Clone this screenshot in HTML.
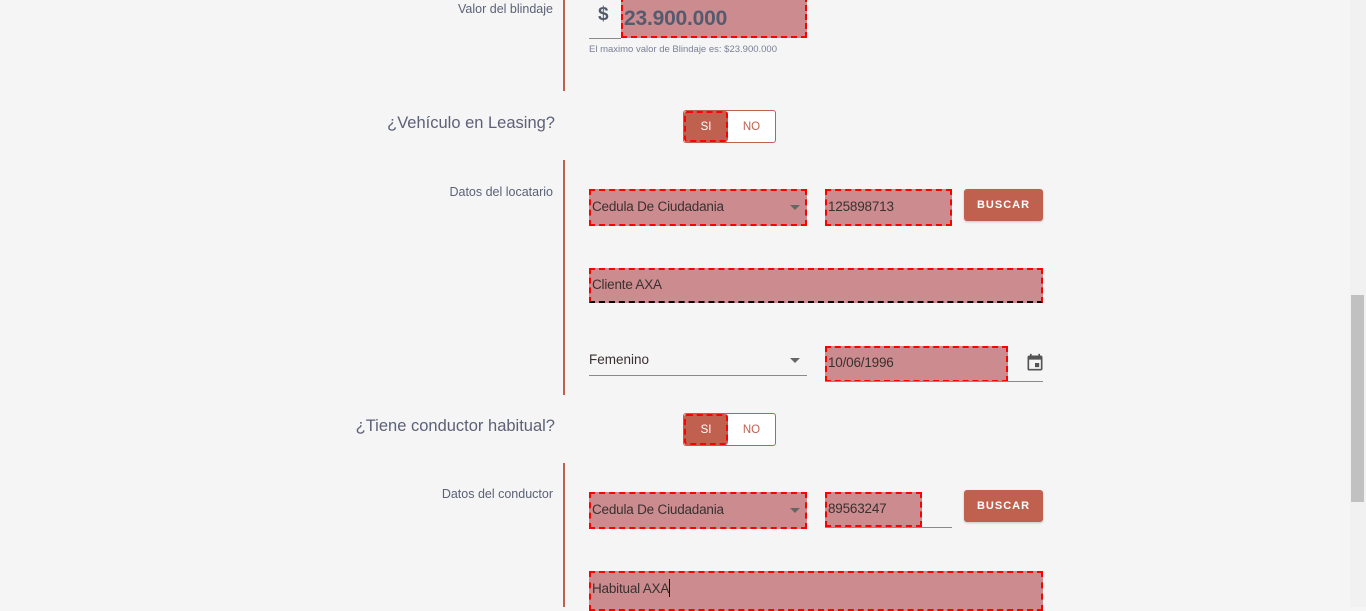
<!DOCTYPE html>
<html><head><meta charset="utf-8"><style>
*{margin:0;padding:0;box-sizing:border-box}
html,body{width:1366px;height:607px;overflow:hidden;background:#f5f5f5;font-family:"Liberation Sans",sans-serif}
.a{position:absolute}
.vl{position:absolute;left:563px;width:2px;background:#c0604f}
.lbl{position:absolute;color:#5c6178;font-size:12.5px;text-align:right;right:813px}
.q{position:absolute;color:#5c6178;font-size:16.5px;text-align:right;right:811px}
.hl{position:absolute;background:#cc8c8f;border:2px dashed #ff0000;color:#3a3030;font-size:13.5px;padding-left:1px;padding-bottom:3px;display:flex;align-items:center;letter-spacing:-0.2px}
.ul{position:absolute;height:1px;background:#8a8a8a}
.btn{position:absolute;background:#c0604f;color:#fff;font-size:11px;font-weight:bold;letter-spacing:1px;border-radius:3px;display:flex;align-items:center;justify-content:center;box-shadow:0 1px 2px rgba(0,0,0,.2)}
.tog{position:absolute;width:93px;height:33px;border:1px solid #c0604f;border-radius:3px;background:#fff;overflow:hidden}
.tog .si{position:absolute;left:0;top:0;width:44px;height:31px;background:#c0604f;border:2px dashed #ff0000;border-radius:3px;color:#fff;font-size:11.5px;display:flex;align-items:center;justify-content:center}
.tog .no{position:absolute;left:44px;top:0;width:47px;height:31px;color:#c0604f;font-size:11.5px;display:flex;align-items:center;justify-content:center}
.arr{position:absolute;width:0;height:0;border-left:5px solid transparent;border-right:5px solid transparent;border-top:5px solid #666}
</style></head><body>

<div class="vl" style="top:0;height:91px"></div>
<div class="vl" style="top:160px;height:235px"></div>
<div class="vl" style="top:463px;height:144px"></div>

<div class="lbl" style="top:2px">Valor del blindaje</div>
<div class="a" style="left:598px;top:4px;font-size:19px;color:#555b6e;font-weight:bold">$</div>
<div class="hl" style="left:621px;top:-4px;width:186px;height:42px;font-size:21px;color:#555b6e;padding-top:4px;padding-bottom:0;font-weight:bold">23.900.000</div>
<div class="ul" style="left:589px;top:38px;width:32px"></div>
<div class="a" style="left:589px;top:44px;font-size:9.5px;color:#7a8096">El maximo valor de Blindaje es: $23.900.000</div>

<div class="q" style="top:114px">¿Vehículo en Leasing?</div>
<div class="tog" style="left:683px;top:110px"><div class="si">SI</div><div class="no">NO</div></div>

<div class="lbl" style="top:185px">Datos del locatario</div>
<div class="hl" style="left:589px;top:189px;width:218px;height:37px">Cedula De Ciudadania</div>
<div class="arr" style="left:790px;top:205px"></div>
<div class="hl" style="left:825px;top:189px;width:127px;height:37px">125898713</div>
<div class="btn" style="left:964px;top:189px;width:79px;height:32px">BUSCAR</div>

<div class="hl" style="left:589px;top:268px;width:454px;height:35px;border-bottom-color:#000">Cliente AXA</div>

<div class="a" style="left:589px;top:352px;font-size:13.5px;color:#3a3030">Femenino</div>
<div class="arr" style="left:790px;top:358px"></div>
<div class="ul" style="left:589px;top:375px;width:218px"></div>
<div class="hl" style="left:825px;top:346px;width:183px;height:36px">10/06/1996</div>
<div class="ul" style="left:825px;top:381px;width:218px"></div>
<svg class="a" style="left:1025px;top:353px" width="20" height="20" viewBox="0 0 24 24"><path fill="#555" d="M17 12h-5v5h5v-5zM16 1v2H8V1H6v2H5c-1.11 0-1.99.9-1.99 2L3 19a2 2 0 0 0 2 2h14c1.1 0 2-.9 2-2V5c0-1.1-.9-2-2-2h-1V1h-2zm3 18H5V8h14v11z"/></svg>

<div class="q" style="top:417px">¿Tiene conductor habitual?</div>
<div class="tog" style="left:683px;top:413px"><div class="si">SI</div><div class="no">NO</div></div>

<div class="lbl" style="top:487px">Datos del conductor</div>
<div class="hl" style="left:589px;top:492px;width:218px;height:37px">Cedula De Ciudadania</div>
<div class="arr" style="left:790px;top:508px"></div>
<div class="hl" style="left:825px;top:492px;width:97px;height:35px">89563247</div>
<div class="ul" style="left:825px;top:527px;width:127px"></div>
<div class="btn" style="left:964px;top:490px;width:79px;height:32px">BUSCAR</div>

<div class="hl" style="left:589px;top:571px;width:454px;height:40px;padding-bottom:6px">Habitual AXA<span style="display:inline-block;width:1px;height:18px;background:#000"></span></div>

<div class="a" style="left:1350px;top:0;width:16px;height:607px;background:#f1f1f1"></div>
<div class="a" style="left:1351px;top:295px;width:13px;height:207px;background:#c1c1c1"></div>
</body></html>
